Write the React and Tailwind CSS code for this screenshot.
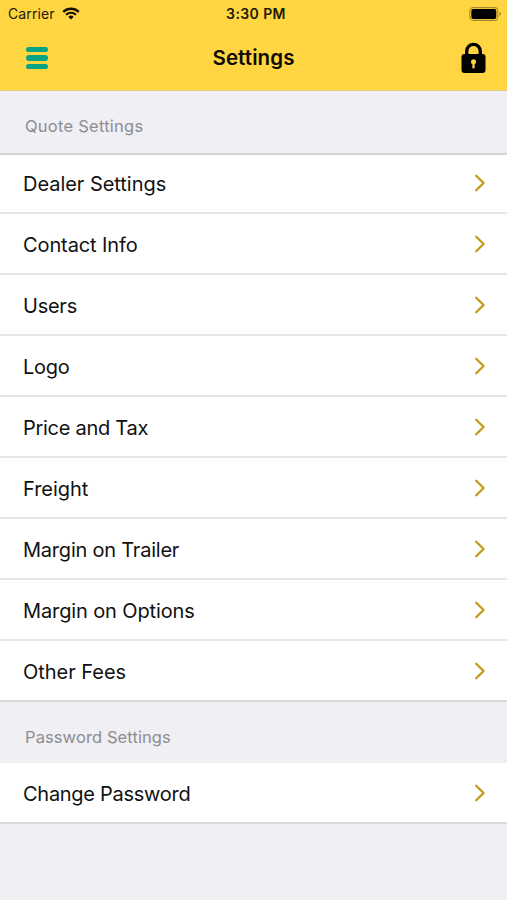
import React from "react";

const quoteSettings = [
  { label: "Dealer Settings", spacing: "tracking-[-0.04px]" },
  { label: "Contact Info", spacing: "tracking-[-0.1px]" },
  { label: "Users", spacing: "tracking-[-0.25px]" },
  { label: "Logo", spacing: "tracking-[-0.25px]" },
  { label: "Price and Tax", spacing: "tracking-[-0.28px]" },
  { label: "Freight", spacing: "tracking-[-0.05px]" },
  { label: "Margin on Trailer", spacing: "tracking-[-0.22px]" },
  { label: "Margin on Options", spacing: "tracking-[-0.12px]" },
  { label: "Other Fees", spacing: "tracking-[-0.03px]" },
];

const passwordSettings = [
  { label: "Change Password", spacing: "tracking-[-0.28px]" },
];

const WifiIcon = () => (
  <svg width="18" height="13" viewBox="0 0 18 13" fill="none" stroke="#161103">
    <path d="M1.2 4.9a11.2 11.2 0 0 1 15.6 0" strokeWidth="2.3" />
    <path d="M4 7.8a7.2 7.2 0 0 1 10 0" strokeWidth="2.1" />
    <path d="M9 12.6 6.3 9.9a3.9 3.9 0 0 1 5.4 0z" fill="#161103" stroke="none" />
  </svg>
);

const BatteryIcon = () => (
  <svg width="33" height="14" viewBox="0 0 33 14" fill="none">
    <rect x="0.8" y="0.6" width="28" height="12.8" rx="3.4" stroke="#a58a2b" strokeWidth="1.1" />
    <rect x="2.3" y="2.1" width="25" height="9.8" rx="2" fill="#000" />
    <path d="M30.3 4.8c1.9.6 1.9 3.8 0 4.4z" fill="#a58a2b" />
  </svg>
);

const LockIcon = () => (
  <svg width="25" height="32" viewBox="0 0 25 32" fill="none">
    <path d="M5.7 13V9.2a6.8 6.8 0 0 1 13.6 0V13" stroke="#000" strokeWidth="3.4" />
    <rect x="0.5" y="12" width="24" height="19" rx="3" fill="#000" />
    <circle cx="12.5" cy="19.8" r="2.5" fill="#ffd541" />
    <path d="M11.4 21h2.2v5.4h-2.2z" fill="#ffd541" />
  </svg>
);

const ChevronIcon = () => (
  <svg className="-mt-0.5" width="12" height="18" viewBox="0 0 12 18" fill="none">
    <path
      d="M2.2 1.7 9.6 9 2.2 16.3"
      stroke="#c39a1b"
      strokeWidth="2.3"
      strokeLinecap="round"
      strokeLinejoin="round"
    />
  </svg>
);

const SettingsList = ({ items, className = "" }) => (
  <ul className={`flex flex-col ${className}`}>
    {items.map((item) => (
      <li
        key={item.label}
        className="flex h-[61px] items-center justify-between border-b-2 border-[#e6e6e8] bg-white pr-[21px] pl-[23px] pt-0.5 last:border-[#d9d9dc]"
      >
        <span className={`text-[20px] leading-6 text-[#111] ${item.spacing}`}>
          {item.label}
        </span>
        <ChevronIcon />
      </li>
    ))}
  </ul>
);

const App = () => {
  return (
    <div className="flex h-[900px] w-full flex-col overflow-hidden bg-[#efeff4] font-['Inter',sans-serif]">
      <header className="h-[91px] border-b border-[#dccb88] bg-[#ffd541]">
        <div className="grid h-[27px] grid-cols-3 items-center pl-2 pr-[5px]">
          <div className="flex items-center gap-[7px]">
            <span className="text-[14px] tracking-[0.1px] text-[#1f1805]">Carrier</span>
            <WifiIcon />
          </div>
          <span className="pl-0.5 text-center text-[14px] font-semibold tracking-[0.4px] text-[#1f1805]">
            3:30 PM
          </span>
          <div className="flex justify-end">
            <BatteryIcon />
          </div>
        </div>
        <div className="grid h-[62px] grid-cols-3 items-center px-[21px]">
          <button className="ml-[5px] flex w-[22px] flex-col gap-[3px]">
            <span className="h-[5.5px] w-full rounded-full bg-[#08a383]" />
            <span className="h-[5.5px] w-full rounded-full bg-[#08a383]" />
            <span className="h-[5.5px] w-full rounded-full bg-[#08a383]" />
          </button>
          <h1 className="pt-px text-center text-[20.5px] font-semibold tracking-[0.1px] text-[#0d0a02]">
            Settings
          </h1>
          <button className="flex justify-end">
            <LockIcon />
          </button>
        </div>
      </header>
      <h2 className="flex h-16 items-center border-b-2 border-[#d5d5d8] pl-[25px] pt-2 text-[16.5px] tracking-[0.25px] text-[#8d8d92]">
        Quote Settings
      </h2>
      <SettingsList
        items={quoteSettings}
        className="[&>li:first-child]:h-[59px] [&>li:first-child]:pt-0"
      />
      <h2 className="flex h-[61px] items-center pl-[25px] pt-2.5 text-[16.5px] tracking-[0.1px] text-[#8d8d92]">
        Password Settings
      </h2>
      <SettingsList items={passwordSettings} />
    </div>
  );
};

export default App;
